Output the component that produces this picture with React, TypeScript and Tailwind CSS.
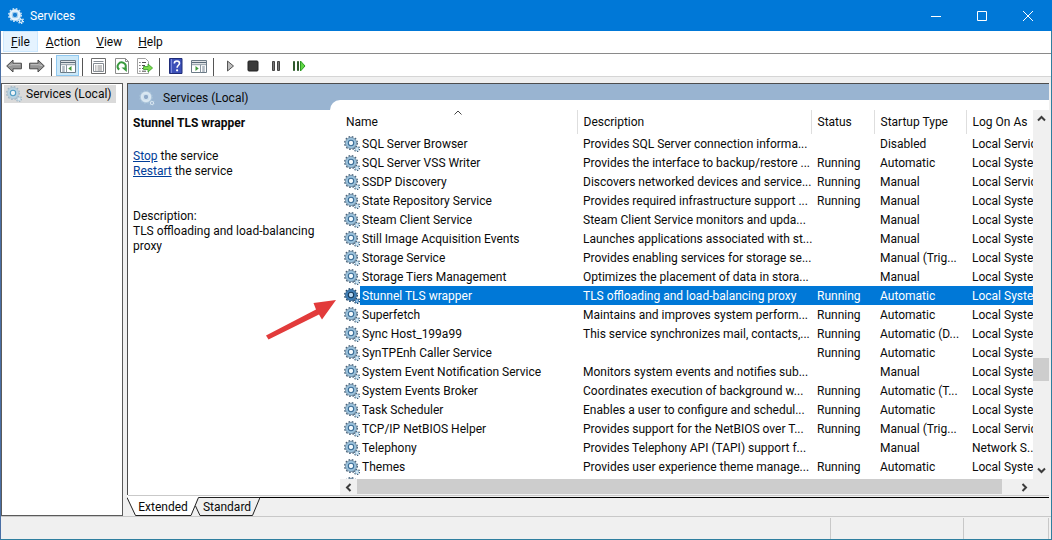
import React, { useState } from 'react';
import clsx from 'clsx';

interface Service {
  name: string;
  description: string;
  status: string;
  startup: string;
  logOn: string;
}

const services: Service[] = [
  { name: 'SQL Server Browser', description: 'Provides SQL Server connection informa...', status: '', startup: 'Disabled', logOn: 'Local Servic' },
  { name: 'SQL Server VSS Writer', description: 'Provides the interface to backup/restore ...', status: 'Running', startup: 'Automatic', logOn: 'Local Syste' },
  { name: 'SSDP Discovery', description: 'Discovers networked devices and service...', status: 'Running', startup: 'Manual', logOn: 'Local Servic' },
  { name: 'State Repository Service', description: 'Provides required infrastructure support ...', status: 'Running', startup: 'Manual', logOn: 'Local Syste' },
  { name: 'Steam Client Service', description: 'Steam Client Service monitors and upda...', status: '', startup: 'Manual', logOn: 'Local Syste' },
  { name: 'Still Image Acquisition Events', description: 'Launches applications associated with st...', status: '', startup: 'Manual', logOn: 'Local Syste' },
  { name: 'Storage Service', description: 'Provides enabling services for storage se...', status: '', startup: 'Manual (Trig...', logOn: 'Local Syste' },
  { name: 'Storage Tiers Management', description: 'Optimizes the placement of data in stora...', status: '', startup: 'Manual', logOn: 'Local Syste' },
  { name: 'Stunnel TLS wrapper', description: 'TLS offloading and load-balancing proxy', status: 'Running', startup: 'Automatic', logOn: 'Local Syste' },
  { name: 'Superfetch', description: 'Maintains and improves system perform...', status: 'Running', startup: 'Automatic', logOn: 'Local Syste' },
  { name: 'Sync Host_199a99', description: 'This service synchronizes mail, contacts,...', status: 'Running', startup: 'Automatic (D...', logOn: 'Local Syste' },
  { name: 'SynTPEnh Caller Service', description: '', status: 'Running', startup: 'Automatic', logOn: 'Local Syste' },
  { name: 'System Event Notification Service', description: 'Monitors system events and notifies sub...', status: '', startup: 'Manual', logOn: 'Local Syste' },
  { name: 'System Events Broker', description: 'Coordinates execution of background w...', status: 'Running', startup: 'Automatic (T...', logOn: 'Local Syste' },
  { name: 'Task Scheduler', description: 'Enables a user to configure and schedul...', status: 'Running', startup: 'Automatic', logOn: 'Local Syste' },
  { name: 'TCP/IP NetBIOS Helper', description: 'Provides support for the NetBIOS over T...', status: 'Running', startup: 'Manual (Trig...', logOn: 'Local Servic' },
  { name: 'Telephony', description: 'Provides Telephony API (TAPI) support f...', status: '', startup: 'Manual', logOn: 'Network S..' },
  { name: 'Themes', description: 'Provides user experience theme manage...', status: 'Running', startup: 'Automatic', logOn: 'Local Syste' },
];

type GearTone = 'list' | 'selected' | 'pale' | 'title' | 'header';

const gearTones: Record<GearTone, { teeth: string; ring: string; hub: string; fill: string }> = {
  list: { teeth: '#48637a', ring: '#9cc3dd', hub: '#3a6d96', fill: '#f4fafd' },
  selected: { teeth: '#1d4569', ring: '#3f7fb8', hub: '#12395c', fill: '#b9d8f2' },
  pale: { teeth: '#9fb6c6', ring: '#b9d3e2', hub: '#4f9cc4', fill: '#eef4f7' },
  title: { teeth: '#cfe6f7', ring: '#e6f3fc', hub: '#a9d2ef', fill: '#1c7fd2' },
  header: { teeth: '#a3bfd7', ring: '#dbe8f2', hub: '#d2e4f0', fill: '#8fa9c8' },
};

function GearIcon({ tone }: { tone: GearTone }) {
  const c = gearTones[tone];
  return (
    <svg className="h-4 w-4 shrink-0" viewBox="0 0 16 16" fill="none" aria-hidden="true">
      <circle cx="7" cy="7" r="6.3" stroke={c.teeth} strokeWidth="1.4" strokeDasharray="1.65 1.65" />
      <circle cx="7" cy="7" r="4.4" fill={c.fill} stroke={c.ring} strokeWidth="2.6" />
      <circle cx="7" cy="7" r="5.6" stroke={c.teeth} strokeWidth=".5" />
      <circle cx="7" cy="7" r="2.7" stroke={c.hub} strokeWidth="1.1" />
      <circle cx="13" cy="13" r="2.5" stroke={c.teeth} strokeWidth="1.5" strokeDasharray="1.3 1.3" />
      <circle cx="13" cy="13" r="1.5" fill={c.fill} stroke={c.ring} strokeWidth="1.2" />
    </svg>
  );
}

function ToolButton({ label, active, children }: { label: string; active?: boolean; children: React.ReactNode }) {
  return (
    <button
      aria-label={label}
      className={clsx('flex h-[21px] w-[23px] items-center justify-center border', active ? 'border-[#90c8f0] bg-[#cce8f8]' : 'border-transparent')}
    >
      <svg className="h-4 w-4 shrink-0" viewBox="0 0 16 16" fill="none">{children}</svg>
    </button>
  );
}

function ToolSeparator() {
  return <div className="mr-1 ml-[3px] h-[18px] w-px bg-[#555555]" />;
}

function Toolbar() {
  return (
    <div className="flex h-[23px] items-end border-b border-[#d5d5d5] bg-white pl-px">
      <ToolButton label="Back">
        <path d="M.7 8 7 2v3.2h8.4v5.6H7V14z" fill="#969696" stroke="#4a4a4a" />
        <path d="M3 7.6 6.5 6.7h7.8" stroke="#c4c4c4" />
      </ToolButton>
      <ToolButton label="Forward">
        <path d="M15.3 8 9 2v3.2H.6v5.6H9V14z" fill="#969696" stroke="#4a4a4a" />
        <path d="M13 7.6 9.5 6.7H1.7" stroke="#c4c4c4" />
      </ToolButton>
      <ToolSeparator />
      <ToolButton label="Show/Hide Console Tree" active>
        <path d="M.5 2.5h15v12H.5z" fill="#fff" stroke="#6b7a86" />
        <path d="M1 4.5h14" stroke="#5b6b78" strokeWidth="1.4" />
        <path d="M1 6.7h14M6.5 7v7.5" stroke="#8b98a2" />
        <path d="M2.2 9h2.6M2.2 11h2.6M2.2 13h2.6" stroke="#66788a" />
        <path d="M11.5 8v5L8.3 10.5z" fill="#3f9a3a" />
      </ToolButton>
      <ToolSeparator />
      <ToolButton label="Properties">
        <path d="M.5.5h14v15H.5z" fill="#fff" stroke="#6c6c6c" />
        <path d="M2.5 3.5h10M2.5 5.5h10v8h-10z" stroke="#868d94" />
        <path d="M4 8h1.5M4 10h1.5M4 12h1.5M6.5 8H11M6.5 10H11M6.5 12H11" stroke="#858585" />
      </ToolButton>
      <ToolButton label="Refresh">
        <path d="M1.5.5h10l3 3v12h-13z" fill="#fff" stroke="#8c8c8c" />
        <path d="M11.5.5v3h3" stroke="#8c8c8c" />
        <path d="M5.2 11.6A4 4 0 1 1 11.4 10" stroke="#38993d" strokeWidth="2" />
        <path d="M7.5 9.4h5.3v4.7z" fill="#38993d" />
      </ToolButton>
      <ToolButton label="Export List">
        <path d="M.5.5h8l3 3v12H.5z" fill="#fff" stroke="#a2a2a2" />
        <path d="M2.3 4.5H3.5M5 4.5h4M2.3 7.5H3.5M5 7.5h3M2.3 10.5H3.5M5 10.5h1M2.3 13.2H3.5M5 13.2h4" stroke="#4f4f4f" />
        <path d="M6.5 8.5H11V6l4.6 4-4.6 4v-2.5H6.5z" fill="#7bdc4c" stroke="#379b28" strokeWidth=".8" />
      </ToolButton>
      <ToolSeparator />
      <ToolButton label="Help">
        <path d="M1.5.5H14v15H1.5z" fill="#3c50b8" stroke="#1f2c77" />
        <path d="M3.5 1v14" stroke="#7d8cdc" />
        <path d="M6.3 5.5c0-3.5 5.2-3.3 5.2-.2 0 2-2.4 2-2.4 4.4" stroke="#fff" strokeWidth="1.6" />
        <circle cx="9.1" cy="12.3" r="1.1" fill="#fff" />
      </ToolButton>
      <ToolButton label="Show/Hide Action Pane">
        <path d="M.5 2.5h15v12H.5z" fill="#fff" stroke="#6b7a86" />
        <path d="M1 4.5h14" stroke="#5b6b78" strokeWidth="1.4" />
        <path d="M1 6.7h14M9.5 7v7.5" stroke="#8b98a2" />
        <path d="M11.2 9h2.6M11.2 11h2.6M11.2 13h2.6" stroke="#66788a" />
        <path d="M4.5 8v5l3.2-2.5z" fill="#3f9a3a" />
      </ToolButton>
      <ToolSeparator />
      <ToolButton label="Start Service">
        <path d="M5.5 3v10l6-5z" fill="#bdbdbd" stroke="#555" />
      </ToolButton>
      <ToolButton label="Stop Service">
        <rect x="3" y="3" width="10" height="10" rx="1" fill="#3a3a3a" stroke="#222" />
      </ToolButton>
      <ToolButton label="Pause Service">
        <path d="M4.5 3.5h2v9h-2zM9.5 3.5h2v9h-2z" fill="#777" stroke="#444" />
      </ToolButton>
      <ToolButton label="Restart Service">
        <path d="M2.5 3.5h1v9h-1zM6.5 3.5h1v9h-1z" fill="#3f8f3a" stroke="#2f5a2d" />
        <path d="M9.5 3v10L14 8z" fill="#5fd644" stroke="#2b9a22" />
      </ToolButton>
    </div>
  );
}

function Chevron({ d }: { d: string }) {
  return (
    <svg className="h-[9px] w-[9px]" viewBox="0 0 9 9" fill="none" aria-hidden="true">
      <path d={d} stroke="#3c3c3c" strokeWidth="2" />
    </svg>
  );
}

function Titlebar() {
  return (
    <header className="flex h-[31px] items-center bg-[#0078d7] pr-px pl-2 text-white">
      <GearIcon tone="title" />
      <h1 className="flex-1 pl-[6px]">Services</h1>
      <button aria-label="Minimize" className="flex h-full w-[46px] items-center justify-center">
        <svg className="h-[10px] w-[10px]" viewBox="0 0 10 10" stroke="#fff"><path d="M0 5.5h10" /></svg>
      </button>
      <button aria-label="Maximize" className="flex h-full w-[46px] items-center justify-center">
        <svg className="h-[10px] w-[10px]" viewBox="0 0 10 10" stroke="#fff" fill="none"><path d="M.5.5h9v9h-9z" /></svg>
      </button>
      <button aria-label="Close" className="flex h-full w-[46px] items-center justify-center">
        <svg className="h-[10px] w-[10px]" viewBox="0 0 10 10" stroke="#fff"><path d="m0 0 10 10M10 0 0 10" /></svg>
      </button>
    </header>
  );
}

function ServiceDetails({ service }: { service: Service }) {
  return (
    <section className="relative w-[212px] shrink-0 pt-[6px] pr-2 pl-[5px] leading-[15px]">
      <h2 className="font-bold">{service.name}</h2>
      <p className="mt-[18px]">
        <a href="#stop" className="text-[#003d99] underline">Stop</a> the service
      </p>
      <p>
        <a href="#restart" className="text-[#003d99] underline">Restart</a> the service
      </p>
      <p className="mt-[30px]">Description:</p>
      <p>{service.description}</p>
      {/* Red pointer to the selected row */}
      <svg className="absolute top-[188px] left-[137px] h-[44px] w-[74px]" viewBox="0 0 74 44" aria-hidden="true">
        <path d="M1 37.5 51 11.5 48.5 5 71 2 57 21.5 54 16.5 3.5 41.5z" fill="#e23b3b" />
      </svg>
    </section>
  );
}

const columns = ['Name', 'Description', 'Status', 'Startup Type', 'Log On As'];

function ServiceTable({ selected, onSelect }: { selected: string; onSelect: (name: string) => void }) {
  return (
    <table className="w-full table-fixed border-collapse text-left whitespace-nowrap">
      <colgroup>
        <col className="w-[237px]" />
        <col />
        <col className="w-[63px]" />
        <col className="w-[92px]" />
        <col className="w-[67px]" />
      </colgroup>
      <thead>
        <tr className="h-6">
          {columns.map((col) => (
            <th key={col} className={clsx('relative p-0 pl-[6px] font-normal', col !== 'Log On As' && 'border-r border-[#dedede]')}>
              {col}
              {col === 'Name' && (
                <svg className="absolute top-0 left-1/2 h-[5px] w-2 -translate-x-1/2" viewBox="0 0 8 5" fill="none" aria-hidden="true">
                  <path d="M.5 4.5 4 1l3.5 3.5" stroke="#444" />
                </svg>
              )}
            </th>
          ))}
        </tr>
      </thead>
      <tbody>
        {services.map((s) => {
          const isSelected = s.name === selected;
          const cell = clsx('p-0 pl-[6px]', isSelected && 'bg-[#0078d7] text-white');
          return (
            <tr key={s.name} className="h-[19px]" onClick={() => onSelect(s.name)}>
              <td className="p-0 pl-1">
                <div className="flex h-[19px] items-center">
                  <GearIcon tone={isSelected ? 'selected' : 'list'} />
                  <span className={clsx('flex h-full flex-1 items-center pl-[2px]', isSelected && 'bg-[#0078d7] text-white')}>{s.name}</span>
                </div>
              </td>
              <td className={cell}>{s.description}</td>
              <td className={cell}>{s.status}</td>
              <td className={cell}>{s.startup}</td>
              <td className={cell}>{s.logOn}</td>
            </tr>
          );
        })}
        <tr>
          <td className="p-0 pt-px pl-1"><GearIcon tone="list" /></td>
        </tr>
      </tbody>
    </table>
  );
}

function ViewTabs() {
  return (
    <div className="flex h-[21px] bg-[#f0f0f0]">
      <div role="tablist" className="relative flex w-[133px] shrink-0">
        <svg className="absolute inset-0 h-[21px] w-[133px]" viewBox="0 0 133 21" fill="none" aria-hidden="true">
          <path d="M0 0h133v2H70.5L64 20.5H9L0 2z" fill="#fff" />
          <path d="M0 2.5 8.5 20.5H64L71.5 2.5H133L125.5 20.5H73L68.5 11" stroke="#222" />
          <path d="M1 .5h132" stroke="#c9c9c9" />
        </svg>
        <button role="tab" aria-selected="true" className="relative w-[67px] pt-[3px] pl-[5px]">Extended</button>
        <button role="tab" aria-selected="false" className="relative w-[62px] pt-[3px] pl-1">Standard</button>
      </div>
      <div className="flex-1 border-t border-[#c9c9c9]">
        <div className="border-b border-black bg-[#f0f0f0] pt-px" />
      </div>
    </div>
  );
}

export default function App() {
  const [selected, setSelected] = useState('Stunnel TLS wrapper');
  const current = services.find((s) => s.name === selected) ?? services[0];

  return (
    <div className="flex h-screen flex-col overflow-hidden bg-[#f0f0f0] font-['Roboto','Open_Sans',sans-serif] text-[12px] leading-4 text-[#0a0a0a]">
      <Titlebar />
      <div className="flex min-h-0 flex-1 flex-col border-r border-b border-l border-[#2f7f9f] border-l-[#4a6fa5]">
        {/* Menu bar */}
        <nav className="flex h-[23px] items-start border-b border-[#8a8a8a] bg-white pl-[2px]">
          {['File', 'Action', 'View', 'Help'].map((item) => (
            <button key={item} className={clsx('h-[21px] border px-[7px]', item === 'File' ? 'border-[#cce8ff] bg-[#e5f3ff]' : 'border-transparent')}>
              <span className="underline">{item[0]}</span>{item.slice(1)}
            </button>
          ))}
        </nav>
        <Toolbar />

        <main className="flex min-h-0 flex-1 gap-1 pt-[6px]">
          {/* Console tree */}
          <aside className="w-[122px] shrink-0 border border-[#5a5a5a] bg-white pt-px pl-[2px]">
            <button className="flex h-[18px] items-center gap-1 bg-[#dadada] pr-1 pl-[2px]">
              <GearIcon tone="pale" />
              Services (Local)
            </button>
          </aside>

          <div className="flex min-w-0 flex-1 flex-col pr-[2px]">
            <div className="flex min-h-0 flex-1 flex-col border-t border-l border-[#4d4d4d] bg-white">
              <div className="flex h-[26px] items-end bg-[#99b4d1]">
                <div className="flex h-full w-[202px] items-center gap-2 pt-px pl-[11px]">
                  <GearIcon tone="header" />
                  Services (Local)
                </div>
                <div className="h-[10px] flex-1 rounded-tl-[10px] bg-white" />
              </div>
              <div className="flex min-h-0 flex-1">
                <ServiceDetails service={current} />
                <div className="flex min-w-0 flex-1 flex-col">
                  <div className="flex min-h-0 flex-1">
                    <div className="min-w-0 flex-1 overflow-hidden">
                      <ServiceTable selected={selected} onSelect={setSelected} />
                    </div>
                    <div className="flex w-4 shrink-0 flex-col bg-[#f0f0f0]">
                      <button aria-label="Scroll up" className="flex h-[17px] items-center justify-center">
                        <Chevron d="M1 6.5 4.5 3 8 6.5" />
                      </button>
                      <div className="flex-[231]" />
                      <div className="h-[23px] bg-[#cdcdcd]" />
                      <div className="flex-[81]" />
                      <button aria-label="Scroll down" className="flex h-[17px] items-center justify-center">
                        <Chevron d="M1 2.5 4.5 6 8 2.5" />
                      </button>
                    </div>
                  </div>
                  <div className="flex h-4 bg-[#f0f0f0] pr-4">
                    <button aria-label="Scroll left" className="flex w-[17px] items-center justify-center">
                      <Chevron d="M6.5 1 3 4.5 6.5 8" />
                    </button>
                    <div className="h-[15px] flex-1 bg-[#cdcdcd]" />
                    <div className="w-[14px]" />
                    <button aria-label="Scroll right" className="flex w-[17px] items-center justify-center">
                      <Chevron d="M2.5 1 6 4.5 2.5 8" />
                    </button>
                  </div>
                </div>
              </div>
            </div>
            <ViewTabs />
          </div>
        </main>

        {/* Status bar */}
        <footer className="flex h-[23px] border-t border-[#c8c8c8] pt-px pr-[2px]">
          <div className="flex-1 border-r border-[#c8c8c8]" />
          <div className="w-[133px] border-r border-[#c8c8c8]" />
          <div className="w-[85px] border-r border-[#c8c8c8]" />
        </footer>
      </div>
    </div>
  );
}
